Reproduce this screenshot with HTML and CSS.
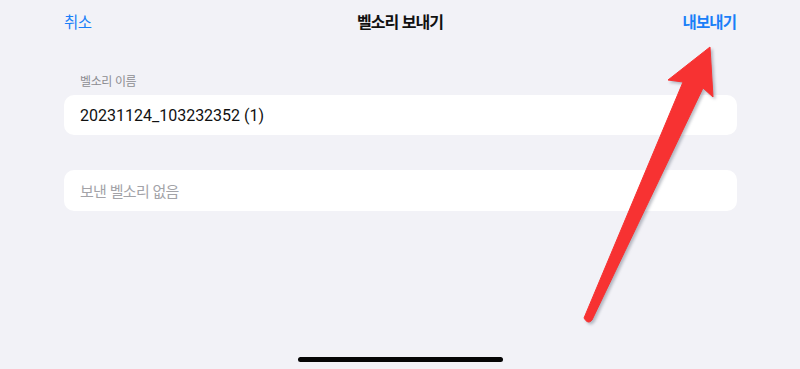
FILE: index.html
```html
<!DOCTYPE html>
<html lang="ko">
<head>
<meta charset="utf-8">
<title>벨소리 보내기</title>
<link rel="stylesheet" href="styles.css">
</head>
<body>
<div class="screen">
  <header class="nav">
    <span class="nav-btn nav-left">취소</span>
    <span class="nav-title">벨소리 보내기</span>
    <span class="nav-btn nav-btn-strong nav-right">내보내기</span>
  </header>
  <main class="content">
    <div class="section-label">벨소리 이름</div>
    <div class="field field-name">20231124_103232352 (1)</div>
    <div class="field field-empty">보낸 벨소리 없음</div>
  </main>
  <div class="home-indicator"></div>
  <svg class="arrow" width="800" height="369" viewBox="0 0 800 369" aria-hidden="true">
    <path d="M710 47 L713 97 L703 88 L592 320 Q588 325 584 318 L683 82 L668 80 Z" fill="#f73232" stroke="#f73232" stroke-width="1" stroke-linejoin="round"/>
  </svg>
</div>
</body>
</html>
```

FILE: styles.css
```css
html, body {
  margin: 0;
  padding: 0;
}

body {
  background: #f2f2f7;
  font-family: "Noto Sans CJK KR", "Noto Sans", sans-serif;
  -webkit-font-smoothing: antialiased;
}

.screen {
  position: relative;
  width: 800px;
  height: 369px;
  overflow: hidden;
  display: flex;
  flex-direction: column;
  background: #f2f2f7;
}

.nav {
  height: 42px;
  padding: 0 64px;
  display: grid;
  grid-template-columns: 1fr auto 1fr;
  align-items: center;
}

.nav-left {
  justify-self: start;
}

.nav-right {
  justify-self: end;
}

.nav-btn {
  font-size: 15.5px;
  line-height: 20px;
  color: #1a7ff8;
  letter-spacing: -0.4px;
}

.nav-btn-strong {
  font-weight: 700;
  letter-spacing: -0.9px;
}

.nav-title {
  font-size: 16px;
  line-height: 20px;
  font-weight: 700;
  color: #111111;
  letter-spacing: -1px;
}

.content {
  padding: 0 63px 0 64px;
  display: flex;
  flex-direction: column;
}

.section-label {
  margin-top: 31px;
  padding-left: 16px;
  font-size: 12px;
  line-height: 16px;
  color: #8d8d92;
  letter-spacing: -0.4px;
}

.field {
  background: #ffffff;
  border-radius: 10px;
  padding: 0 16px;
  display: flex;
  align-items: center;
}

.field-name {
  margin-top: 6px;
  height: 40px;
  font-family: "Roboto", "Liberation Sans", sans-serif;
  font-size: 16px;
  color: #111111;
}

.field-empty {
  margin-top: 35px;
  height: 41px;
  font-size: 15px;
  color: #a3a3a8;
  letter-spacing: -0.7px;
}

.home-indicator {
  margin: auto auto 7px;
  width: 205px;
  height: 5px;
  border-radius: 3px;
  background: #050505;
}

.arrow {
  position: absolute;
  left: 0;
  top: 0;
  filter: drop-shadow(2px 2px 1.5px rgba(60, 70, 90, 0.35));
}
```
